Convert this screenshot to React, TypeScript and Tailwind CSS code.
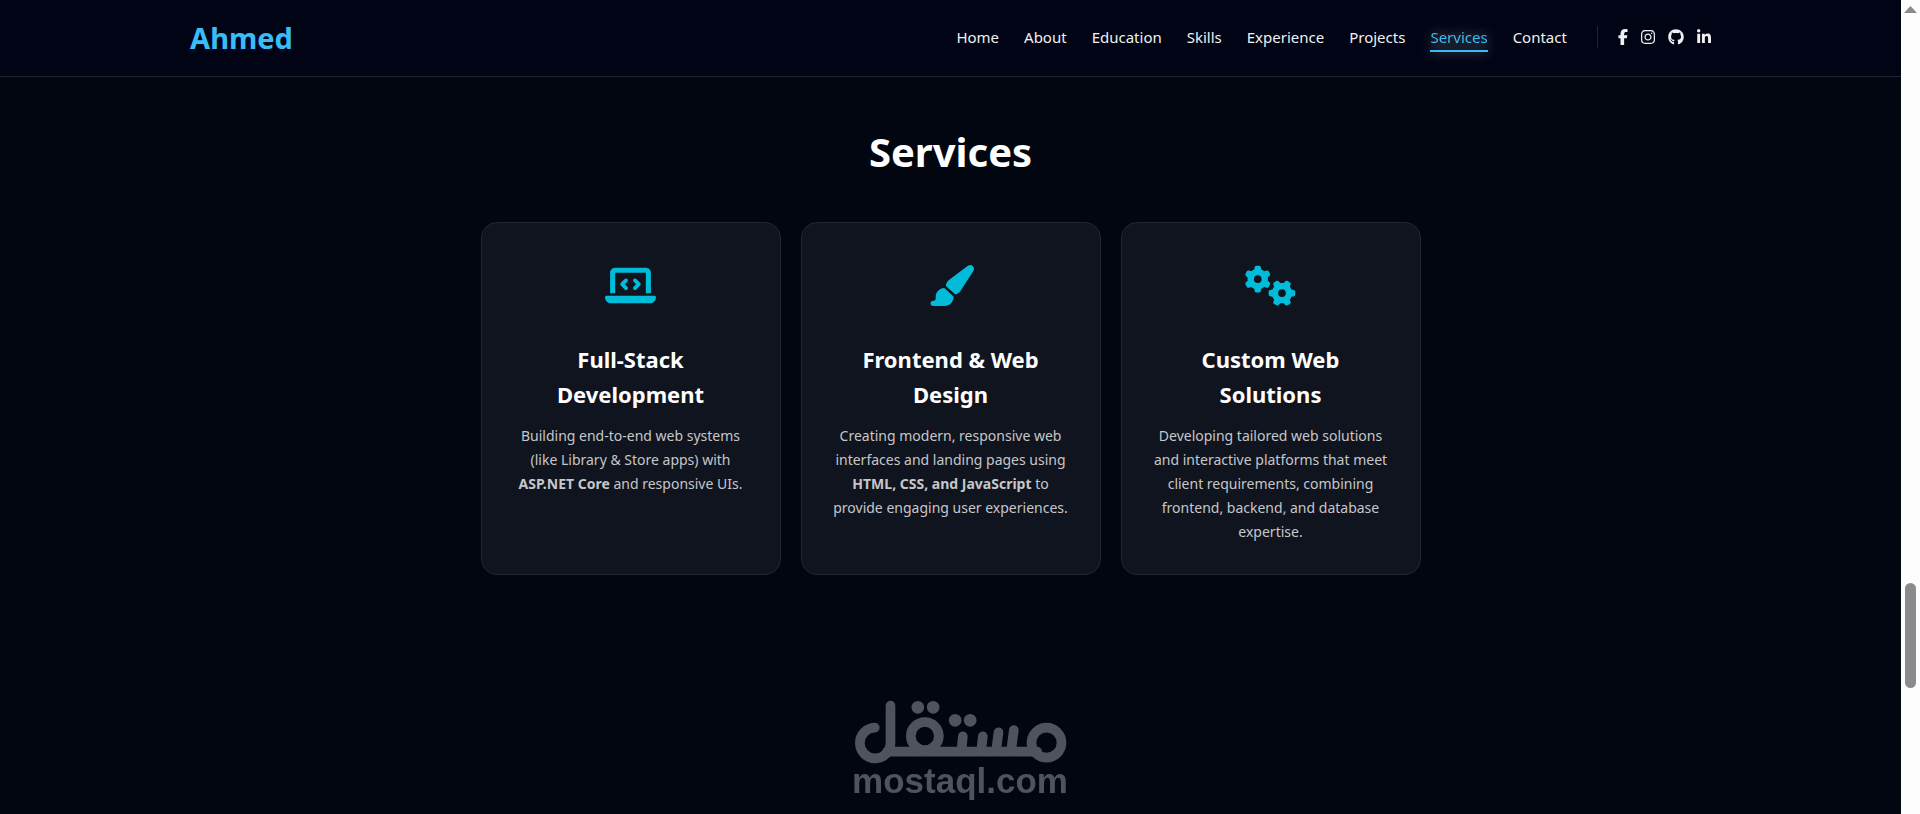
import type { IconType } from 'react-icons'
import { FaFacebookF, FaInstagram, FaGithub, FaLinkedinIn, FaLaptopCode, FaPaintbrush, FaGears } from 'react-icons/fa6'

interface Service { icon: IconType; iconClass: string; title: string; text: React.ReactNode }

const navLinks = ['Home', 'About', 'Education', 'Skills', 'Experience', 'Projects', 'Services', 'Contact']

const socials: { label: string; icon: IconType; iconClass: string }[] = [
  { label: 'Facebook', icon: FaFacebookF, iconClass: 'w-2.5 h-4' },
  { label: 'Instagram', icon: FaInstagram, iconClass: 'w-3.5 h-4' },
  { label: 'GitHub', icon: FaGithub, iconClass: 'w-4 h-4' },
  { label: 'LinkedIn', icon: FaLinkedinIn, iconClass: 'w-3.5 h-4' },
]

const services: Service[] = [
  {
    icon: FaLaptopCode,
    iconClass: 'w-[51px] h-[41px]',
    title: 'Full-Stack Development',
    text: <>Building end-to-end web systems (like Library &amp; Store apps) with <strong>ASP.NET Core</strong> and responsive UIs.</>,
  },
  {
    icon: FaPaintbrush,
    iconClass: 'w-[46px] h-[41px]',
    title: 'Frontend & Web Design',
    text: <>Creating modern, responsive web interfaces and landing pages using <strong>HTML, CSS, and JavaScript</strong> to provide engaging user experiences.</>,
  },
  {
    icon: FaGears,
    iconClass: 'w-[51px] h-[41px]',
    title: 'Custom Web Solutions',
    text: <>Developing tailored web solutions and interactive platforms that meet client requirements, combining frontend, backend, and database expertise.</>,
  },
]

function Header({ active }: { active: string }) {
  return (
    <header className="flex items-center justify-between h-[77px] px-[10%] bg-[#010414] border-b border-[#1f222f]">
      <a href="#home" className="text-[29px] leading-10 font-bold text-[#38bdf8]">Ahmed</a>
      <div className="flex items-center pb-0.5">
        <nav className="flex gap-[25px] text-[15px] leading-6 text-[#f0f0f2]">
          {navLinks.map((link) => (
            <a
              key={link}
              href={`#${link.toLowerCase()}`}
              className={link === active
                ? 'border-b-2 border-[#38bdf8] pb-px -mb-[3px] text-[#38bdf8] drop-shadow-[0_0_6px_#ffffff80]'
                : ''}
            >
              {link}
            </a>
          ))}
        </nav>
        <div className="flex items-center gap-[13px] h-[22px] ml-[30px] pl-5 border-l border-[#1f222f] text-[#f0f0f2]">
          {socials.map(({ label, icon: Icon, iconClass }) => (
            <a key={label} href={`#${label.toLowerCase()}`} aria-label={label}><Icon className={iconClass} /></a>
          ))}
        </div>
      </div>
    </header>
  )
}

function ServiceCard({ icon: Icon, iconClass, title, text }: Service) {
  return (
    <article className="w-[300px] px-7 py-[30px] rounded-2xl border border-[#23262f] bg-[#10141e] text-center">
      <div className="flex items-center justify-center h-[65px] text-[#00bcd8]"><Icon className={iconClass} /></div>
      <h3 className="mt-6 px-3 text-[22px] leading-[35px] font-bold text-white">{title}</h3>
      <p className="mt-3 text-sm leading-6 text-[#c6c7ca]">{text}</p>
    </article>
  )
}

// mostaql mark stamped over the bottom of the window
function Watermark() {
  return (
    <div className="fixed inset-x-0 bottom-4 flex flex-col items-center text-[#50535c] pointer-events-none">
      <svg viewBox="72 55 636 195" className="w-[213px] h-[65px]" fill="none" stroke="currentColor" strokeWidth="29" strokeLinecap="round" aria-hidden="true">
        <path d="M133 141A46 46 0 1 0 180 187V75" />
        <path d="M170 213H620" />
        <circle cx="283" cy="166" r="42" />
        <path d="M397 167L393 210M457 167L452 210M504 155L497 210M550 148L542 210" />
        <circle cx="648" cy="186" r="45" />
        <g fill="currentColor" stroke="none">
          <circle cx="262" cy="80" r="19" />
          <circle cx="308" cy="80" r="19" />
          <circle cx="374" cy="119" r="19" />
          <circle cx="419" cy="119" r="19" />
        </g>
      </svg>
      <span className="font-['Liberation_Sans',sans-serif] text-[35px] leading-[34px] font-bold">mostaql.com</span>
    </div>
  )
}

function Scrollbar() {
  return (
    <div className="flex flex-col items-center w-[19px] shrink-0 bg-[#fdfdfd]" aria-hidden="true">
      <svg viewBox="0 0 13 7" className="mt-1.5 w-[13px] h-[7px]" fill="#8b8b8f"><path d="M6.5 0L13 7H0z" /></svg>
      <div className="grow-[570]" />
      <div className="grow-[105] w-[11px] rounded-full bg-[#8b8b8f]" />
      <div className="grow-[126]" />
    </div>
  )
}

export default function App() {
  return (
    <div className="flex min-h-screen bg-[#020610] font-['Noto_Sans',sans-serif]">
      <div className="flex-1 min-w-0">
        <Header active="Services" />
        <main className="pt-11 pb-16">
          <h2 className="text-center text-[40px] leading-[62px] font-bold text-white">Services</h2>
          <div className="flex flex-wrap justify-center gap-5 mt-[39px]">
            {services.map((s) => <ServiceCard key={s.title} {...s} />)}
          </div>
        </main>
      </div>
      <Scrollbar />
      <Watermark />
    </div>
  )
}
